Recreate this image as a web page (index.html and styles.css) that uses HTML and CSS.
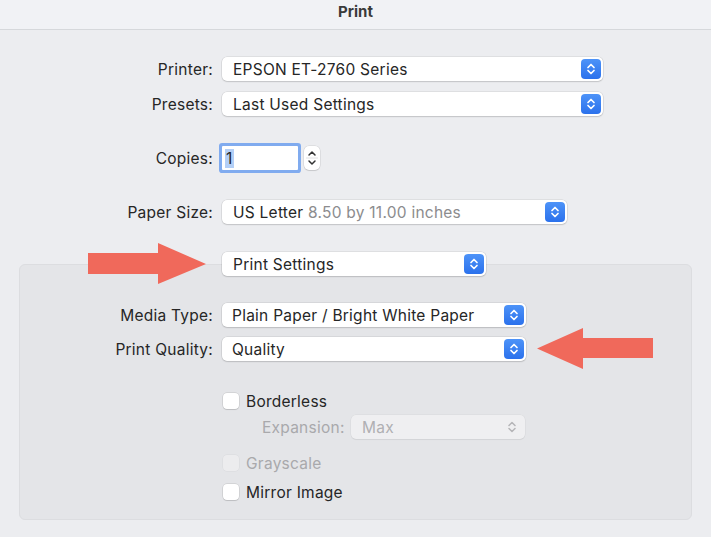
FILE: index.html
```html
<!DOCTYPE html>
<html lang="en">
<head>
    <meta charset="UTF-8">
    <meta name="viewport" content="width=device-width, initial-scale=1.0">
    <title>Print</title>
    <link rel="stylesheet" href="styles.css">
</head>
<body>
    <div class="titlebar">Print</div>

    <div class="sheet">
        <div class="row">
            <span class="label">Printer:</span>
            <div class="popup popup-printer">
                <span class="value">EPSON ET-2760 Series</span>
                <span class="stepper-btn"><svg width="20" height="20" viewBox="0 0 20 20"><path d="M7 8.5 L10 5.5 L13 8.5 M7 11.5 L10 14.5 L13 11.5" fill="none" stroke="#fff" stroke-width="1.7" stroke-linecap="round" stroke-linejoin="round"/></svg></span>
            </div>
        </div>
        <div class="row row-presets">
            <span class="label">Presets:</span>
            <div class="popup popup-printer">
                <span class="value">Last Used Settings</span>
                <span class="stepper-btn"><svg width="20" height="20" viewBox="0 0 20 20"><path d="M7 8.5 L10 5.5 L13 8.5 M7 11.5 L10 14.5 L13 11.5" fill="none" stroke="#fff" stroke-width="1.7" stroke-linecap="round" stroke-linejoin="round"/></svg></span>
            </div>
        </div>

        <div class="row row-copies">
            <span class="label">Copies:</span>
            <div class="copies-field"><span class="selected">1</span></div>
            <div class="spinner">
                <svg width="16" height="24" viewBox="0 0 16 24"><path d="M5 9 L8 6 L11 9 M5 15 L8 18 L11 15" fill="none" stroke="#333" stroke-width="1.5" stroke-linecap="round" stroke-linejoin="round"/><line x1="2" y1="12" x2="14" y2="12" stroke="#e2e2e4" stroke-width="1"/></svg>
            </div>
        </div>

        <div class="row row-paper">
            <span class="label">Paper Size:</span>
            <div class="popup popup-paper">
                <span class="value">US Letter <span class="dim">8.50 by 11.00 inches</span></span>
                <span class="stepper-btn"><svg width="20" height="20" viewBox="0 0 20 20"><path d="M7 8.5 L10 5.5 L13 8.5 M7 11.5 L10 14.5 L13 11.5" fill="none" stroke="#fff" stroke-width="1.7" stroke-linecap="round" stroke-linejoin="round"/></svg></span>
            </div>
        </div>

        <div class="row row-section">
            <span class="label"></span>
            <div class="popup popup-section">
                <span class="value">Print Settings</span>
                <span class="stepper-btn"><svg width="20" height="20" viewBox="0 0 20 20"><path d="M7 8.5 L10 5.5 L13 8.5 M7 11.5 L10 14.5 L13 11.5" fill="none" stroke="#fff" stroke-width="1.7" stroke-linecap="round" stroke-linejoin="round"/></svg></span>
            </div>
        </div>

        <div class="panel">
            <div class="row">
                <span class="label">Media Type:</span>
                <div class="popup popup-media">
                    <span class="value">Plain Paper / Bright White Paper</span>
                    <span class="stepper-btn"><svg width="20" height="20" viewBox="0 0 20 20"><path d="M7 8.5 L10 5.5 L13 8.5 M7 11.5 L10 14.5 L13 11.5" fill="none" stroke="#fff" stroke-width="1.7" stroke-linecap="round" stroke-linejoin="round"/></svg></span>
                </div>
            </div>
            <div class="row row-quality">
                <span class="label">Print Quality:</span>
                <div class="popup popup-media">
                    <span class="value">Quality</span>
                    <span class="stepper-btn"><svg width="20" height="20" viewBox="0 0 20 20"><path d="M7 8.5 L10 5.5 L13 8.5 M7 11.5 L10 14.5 L13 11.5" fill="none" stroke="#fff" stroke-width="1.7" stroke-linecap="round" stroke-linejoin="round"/></svg></span>
                </div>
            </div>

            <div class="row row-borderless">
                <span class="label"></span>
                <span class="checkbox"></span>
                <span class="check-text">Borderless</span>
            </div>
            <div class="row row-expansion">
                <span class="label"></span>
                <span class="sub-label">Expansion:</span>
                <div class="popup popup-expansion">
                    <span class="value">Max</span>
                    <span class="plain-arrows"><svg width="20" height="20" viewBox="0 0 20 20"><path d="M7 8.5 L10 5.5 L13 8.5 M7 11.5 L10 14.5 L13 11.5" fill="none" stroke="#b5b5b8" stroke-width="1.5" stroke-linecap="round" stroke-linejoin="round"/></svg></span>
                </div>
            </div>
            <div class="row row-grayscale">
                <span class="label"></span>
                <span class="checkbox checkbox-off"></span>
                <span class="check-text disabled">Grayscale</span>
            </div>
            <div class="row row-mirror">
                <span class="label"></span>
                <span class="checkbox"></span>
                <span class="check-text">Mirror Image</span>
            </div>
        </div>
    </div>

    <!-- annotation arrows drawn over the dialog -->
    <svg class="note-arrow note-right" width="119" height="41" viewBox="0 0 119 41"><polygon points="0,10 70,10 70,0 118,21 70,41 70,31 0,31" fill="#f0695b"/></svg>
    <svg class="note-arrow note-left" width="117" height="41" viewBox="0 0 117 41"><polygon points="0,20.5 46,0 46,10 116,10 116,30 46,30 46,41" fill="#f0695b"/></svg>
</body>
</html>
```

FILE: styles.css
```css
body {
    margin: 0;
    width: 711px;
    height: 537px;
    position: relative;
    overflow: hidden;
    background-color: #ecedf0;
    font-family: Inter, "Noto Sans", sans-serif;
    font-size: 15.5px;
    letter-spacing: 0.25px;
    color: #262626;
}
.titlebar {
    height: 29px;
    line-height: 24px;
    text-align: center;
    font-weight: 700;
    font-size: 15px;
    letter-spacing: 0;
    color: #3a3a3a;
    background-color: #f1f2f5;
    border-bottom: 1px solid #d6d8db;
}
.sheet {
    padding-top: 27px;
}
.row {
    display: flex;
    align-items: center;
    height: 24px;
}
.label {
    width: 222px;
    flex-shrink: 0;
    box-sizing: border-box;
    padding-right: 9px;
    text-align: right;
    white-space: nowrap;
}
.row-presets {
    margin-top: 11px;
}
.row-copies {
    margin-top: 30px;
}
.row-paper {
    margin-top: 30px;
}
.row-section {
    margin-top: 28px;
    position: relative;
    z-index: 1;
}
.popup {
    position: relative;
    height: 24px;
    box-sizing: border-box;
    padding-left: 11px;
    display: flex;
    align-items: center;
    background-color: #fff;
    border-radius: 5px;
    box-shadow: 0 0 0 0.5px rgba(0, 0, 0, 0.12), 0 1px 1.5px rgba(0, 0, 0, 0.12);
    white-space: nowrap;
}
.popup-printer {
    width: 381px;
}
.popup-paper {
    width: 345px;
}
.popup-section {
    width: 264px;
}
.popup-media {
    width: 304px;
    padding-left: 10px;
}
.popup-expansion {
    width: 174px;
    background-color: #efeff1;
    color: #b0b0b3;
    box-shadow: 0 0 0 0.5px rgba(0, 0, 0, 0.05), 0 1px 1px rgba(0, 0, 0, 0.05);
}
.stepper-btn {
    position: absolute;
    right: 2px;
    top: 2px;
    width: 20px;
    height: 20px;
    border-radius: 4px;
    background: linear-gradient(#4d93f8, #2b71ec);
}
.stepper-btn svg, .plain-arrows svg, .spinner svg {
    display: block;
}
.plain-arrows {
    position: absolute;
    right: 3px;
    top: 2px;
}
.dim {
    color: #8c8c8e;
}
.copies-field {
    width: 76px;
    height: 24px;
    box-sizing: border-box;
    padding-left: 3px;
    display: flex;
    align-items: center;
    background-color: #fff;
    box-shadow: 0 0 0 3px #80abef;
    border-radius: 1px;
}
.selected {
    background-color: #b3cff7;
    padding: 0 1px;
    line-height: 19px;
}
.spinner {
    margin-left: 6px;
    width: 16px;
    height: 24px;
    background-color: #fff;
    border-radius: 5px;
    box-shadow: 0 0 0 0.5px rgba(0, 0, 0, 0.12), 0 1px 1px rgba(0, 0, 0, 0.1);
}
.panel {
    margin: -12px 19px 0;
    height: 256px;
    box-sizing: border-box;
    padding-top: 38px;
    background-color: #e4e5e8;
    border: 1px solid #dcdde0;
    border-radius: 6px;
}
.panel .label {
    width: 202px;
}
.row-quality {
    margin-top: 10px;
}
.row-borderless {
    margin-top: 28px;
}
.row-expansion {
    margin-top: 2px;
}
.row-grayscale {
    margin-top: 12px;
}
.row-mirror {
    margin-top: 5px;
}
.checkbox {
    width: 16px;
    height: 16px;
    margin-left: 1px;
    border-radius: 4px;
    background-color: #fff;
    box-shadow: 0 0 0 0.5px rgba(0, 0, 0, 0.15), 0 1px 1px rgba(0, 0, 0, 0.1);
}
.checkbox-off {
    background-color: #ececee;
    box-shadow: 0 0 0 0.5px rgba(0, 0, 0, 0.05);
}
.check-text {
    margin-left: 7px;
}
.disabled {
    color: #a9a9ac;
}
.sub-label {
    margin-left: 40px;
    width: 89px;
    color: #a9a9ac;
}
.note-arrow {
    position: absolute;
}
.note-right {
    left: 88px;
    top: 243px;
}
.note-left {
    left: 537px;
    top: 328px;
}
```
